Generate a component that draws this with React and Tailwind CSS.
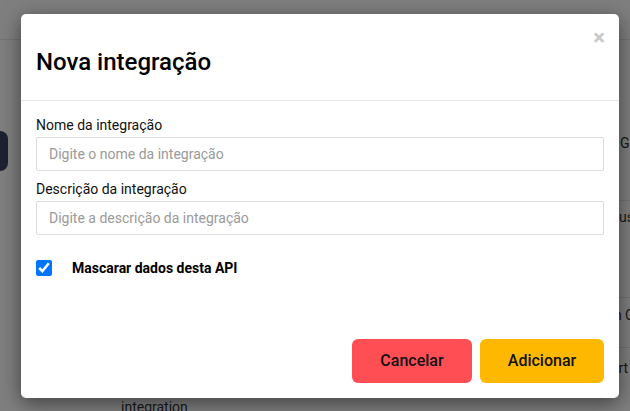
import { useState } from 'react'

const rows = [
  { h: 'h-[97px]', pt: 'pt-[29px]', ml: 'ml-0', right: 'Gateway' },
  { h: 'h-[97px]', pt: 'pt-[6px]', ml: '-ml-[10px]', right: 'Custom' },
  { h: 'h-[50px]', pt: 'pt-[7px]', ml: '-ml-[31px]', right: 'Open Conta' },
  { h: 'h-[70px]', pt: 'pt-[10px]', ml: '-ml-[22px]', right: 'Start', left: 'integration' },
]

function Background() {
  return (
    <div className="min-h-[411px] bg-white text-[#333] text-[14px]">
      <div className="h-[40px] border-b border-[#e5e7eb]" />
      <div className="flex">
        <div className="w-[60px] shrink-0 pt-[91px]">
          <div className="w-[8px] h-[40px] rounded-r-lg bg-[#3a4263]" />
        </div>
        <div className="flex-1 pt-[64px]">
          {rows.map((r, i) => (
            <div key={i} className={`flex border-b border-[#e5e7eb] ${r.h} ${r.pt}`}>
              <div className="w-[560px] shrink-0 pl-[61px] pt-[39px]">{r.left}</div>
              <div className={`whitespace-nowrap ${r.ml}`}>{r.right}</div>
            </div>
          ))}
        </div>
      </div>
    </div>
  )
}

export default function App() {
  const [mask, setMask] = useState(true)

  return (
    <div className="relative w-[630px] h-[411px] overflow-hidden" style={{ fontFamily: 'Roboto, "Noto Sans", sans-serif' }}>
      <Background />
      <div className="absolute inset-0 bg-black/50" />

      {/* Modal */}
      <div className="absolute left-[21px] top-[14px] w-[598px] bg-white rounded-[5px] shadow-[0_5px_20px_rgba(0,0,0,0.5)]">
        <div className="relative px-[15px] pt-[32px] pb-[22px] border-b border-[#e5e5e5]">
          <h4 className="text-[24px] leading-[32px] font-medium text-black">Nova integração</h4>
          <button className="absolute right-[14px] top-[12px] text-[22px] leading-[24px] font-bold text-[#c9c9c9]">×</button>
        </div>

        <div className="px-[15px] pt-[14px]">
          <div className="mb-[8px]">
            <label className="block text-[14px] leading-[20px] text-[#111] mb-[2px]">Nome da integração</label>
            <input
              className="w-full h-[34px] px-[12px] border border-[#dcdcdc] rounded-[2px] text-[14px] placeholder:text-[#9a9a9a] outline-none"
              placeholder="Digite o nome da integração"
            />
          </div>
          <div>
            <label className="block text-[14px] leading-[20px] text-[#111] mb-[2px]">Descrição da integração</label>
            <input
              className="w-full h-[34px] px-[12px] border border-[#dcdcdc] rounded-[2px] text-[14px] placeholder:text-[#9a9a9a] outline-none"
              placeholder="Digite a descrição da integração"
            />
          </div>

          <label className="flex items-center gap-[20px] mt-[25px] h-[16px]">
            <input
              type="checkbox"
              checked={mask}
              onChange={e => setMask(e.target.checked)}
              className="w-[16px] h-[16px] m-0 accent-[#0075ff]"
            />
            <span className="text-[14px] font-bold text-black">Mascarar dados desta API</span>
          </label>
        </div>

        <div className="flex justify-end gap-[8px] px-[15px] pt-[63px] pb-[15px]">
          <button className="w-[120px] h-[44px] rounded-[6px] bg-[#ff4f55] text-[16px] font-medium text-[#111]">Cancelar</button>
          <button className="w-[124px] h-[44px] rounded-[6px] bg-[#ffb800] text-[16px] font-medium text-[#111]">Adicionar</button>
        </div>
      </div>
    </div>
  )
}
